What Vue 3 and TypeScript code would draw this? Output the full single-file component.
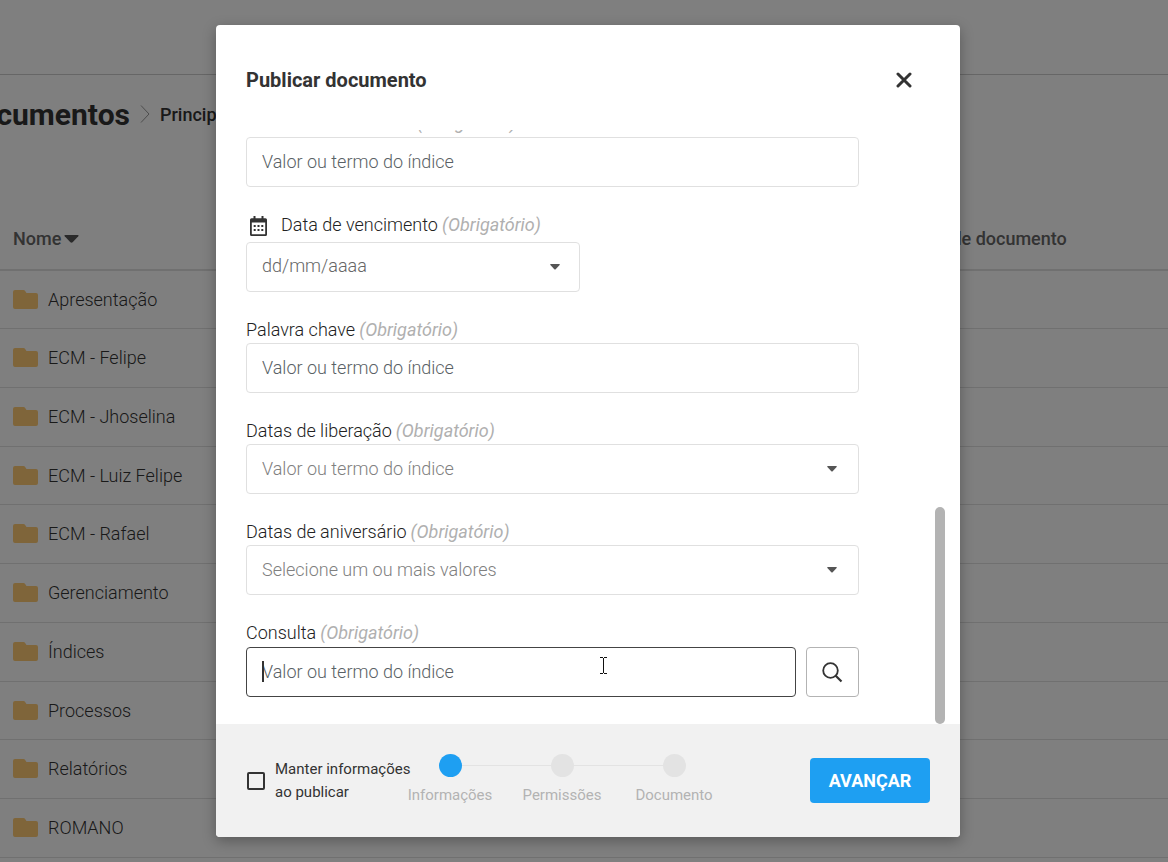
<script setup lang="ts">
import { ref } from 'vue'

interface Field {
  id: string
  label: string
  kind: 'text' | 'date' | 'select' | 'search'
  placeholder: string
}

const folders: string[] = [
  'Apresentação',
  'ECM - Felipe',
  'ECM - Jhoselina',
  'ECM - Luiz Felipe',
  'ECM - Rafael',
  'Gerenciamento',
  'Índices',
  'Processos',
  'Relatórios',
  'ROMANO',
]

const fields: Field[] = [
  { id: 'numero', label: 'Nome do documento', kind: 'text', placeholder: 'Valor ou termo do índice' },
  { id: 'vencimento', label: 'Data de vencimento', kind: 'date', placeholder: 'dd/mm/aaaa' },
  { id: 'palavra', label: 'Palavra chave', kind: 'text', placeholder: 'Valor ou termo do índice' },
  { id: 'liberacao', label: 'Datas de liberação', kind: 'select', placeholder: 'Valor ou termo do índice' },
  { id: 'aniversario', label: 'Datas de aniversário', kind: 'select', placeholder: 'Selecione um ou mais valores' },
  { id: 'consulta', label: 'Consulta', kind: 'search', placeholder: 'Valor ou termo do índice' },
]

const steps: string[] = ['Informações', 'Permissões', 'Documento']
const currentStep = ref(0)
const keep = ref(false)
</script>

<template>
  <div class="screen">
    <main class="page">
      <header class="topbar"></header>
      <nav class="breadcrumb">
        <h1>Documentos</h1>
        <svg width="10" height="18" viewBox="0 0 10 18" fill="none" stroke="#999" aria-hidden="true">
          <path d="M1 .5 9 9 1 17.500" />
        </svg>
        <a href="#principal">Principal</a>
      </nav>
      <table class="listing">
        <thead>
          <tr>
            <th class="name">
              Nome
              <svg width="15" height="8" viewBox="0 0 15 8" aria-hidden="true">
                <path d="M1.300 0h12.400q1.500.2.600 1.300L8.600 7.300q-1.100.9-2.200 0L.700 1.300Q-.2.2 1.300 0Z" fill="#555" />
              </svg>
            </th>
            <th>Tipo de documento</th>
          </tr>
        </thead>
        <tbody>
          <tr v-for="folder in folders" :key="folder">
            <td class="name">
              <span class="entry">
                <svg width="25" height="19" viewBox="0 0 25 19" aria-hidden="true">
                  <path d="M2 0h8.500q.8 0 1.300.6L13.500 3H23q2 0 2 2v12q0 2-2 2H2q-2 0-2-2V2q0-2 2-2Z" fill="#fecb74" />
                </svg>
                {{ folder }}
              </span>
            </td>
            <td></td>
          </tr>
        </tbody>
      </table>
    </main>

    <div class="overlay">
      <section class="modal" role="dialog" aria-labelledby="modal-title">
        <header class="modal-head">
          <h2 id="modal-title">Publicar documento</h2>
          <button class="close" type="button" aria-label="Fechar">
            <svg width="16" height="16" viewBox="0 0 16 16" fill="none" stroke="#333" stroke-width="3" stroke-linecap="round">
              <path d="M2 2 14 14M14 2 2 14" />
            </svg>
          </button>
        </header>

        <div class="modal-body">
          <form class="fields" @submit.prevent>
            <div v-for="field in fields" :key="field.id" class="field" :class="field.kind">
              <label :for="field.id">
                <svg v-if="field.kind === 'date'" class="calendar" width="17" height="20" viewBox="0 0 17 20" fill="#333" aria-hidden="true">
                  <path fill-rule="evenodd" d="M3.500 0H5.500V2.200H11.500V0H13.500V2.200H15.500Q17 2.200 17 3.700V18.500Q17 20 15.500 20H1.500Q0 20 0 18.500V3.700Q0 2.200 1.500 2.200H3.500ZM1.800 6.500V18.200H15.200V6.500Z" />
                  <path d="M3.700 9h2v2h-2zM7.500 9h2v2h-2zM11.300 9h2v2h-2zM3.700 13h2v2h-2zM7.500 13h2v2h-2zM11.300 13h2v2h-2z" />
                </svg>
                <span class="caption">{{ field.label }}</span>
                <em>(Obrigatório)</em>
              </label>
              <div class="control">
                <select v-if="field.kind === 'select'" :id="field.id">
                  <option>{{ field.placeholder }}</option>
                </select>
                <input v-else :id="field.id" type="text" :placeholder="field.placeholder" />
                <svg v-if="field.kind === 'select' || field.kind === 'date'" class="arrow" width="10" height="6" viewBox="0 0 10 6" aria-hidden="true">
                  <path d="M.8 0h8.400q1 .2.400 1L5.700 5.200q-.7.600-1.400 0L.4 1Q-.2.200.8 0Z" fill="#555" />
                </svg>
                <template v-if="field.kind === 'search'">
                  <span class="caret"></span>
                  <svg class="pointer" width="7" height="17" viewBox="0 0 7 17" fill="none" stroke="#111" aria-hidden="true">
                    <path d="M0 .5H3M4 .5H7M3.500 1V16M0 16.500H3M4 16.500H7" />
                  </svg>
                  <button class="lookup" type="button" aria-label="Pesquisar">
                    <svg width="21" height="21" viewBox="0 0 21 21" fill="none" stroke="#333">
                      <circle cx="8.500" cy="8.500" r="7.300" stroke-width="1.800" />
                      <path d="M13.500 13.500 19.500 19.500" stroke-width="2.200" />
                    </svg>
                  </button>
                </template>
              </div>
            </div>
          </form>
          <div class="track"><div class="thumb"></div></div>
        </div>

        <footer class="modal-foot">
          <label class="keep">
            <input v-model="keep" type="checkbox" />
            <span>Manter informações<br />ao publicar</span>
          </label>
          <ol class="steps">
            <li v-for="(step, i) in steps" :key="step" :class="{ active: i === currentStep }">
              <span class="dot"></span>
              {{ step }}
            </li>
          </ol>
          <button class="next" type="button">AVANÇAR</button>
        </footer>
      </section>
    </div>
  </div>
</template>

<style>
body {
  margin: 0;
  overflow: hidden;
}
</style>

<style scoped>
* {
  box-sizing: border-box;
}
.screen {
  height: 100vh;
  overflow: hidden;
  font-family: Roboto, "Liberation Sans", sans-serif;
  font-size: 18px;
  color: #333;
  background: #fff;
}
input,
select,
button {
  font: inherit;
}
.topbar {
  height: 75px;
  border-bottom: 1px solid #ccc;
}
.breadcrumb {
  display: flex;
  align-items: center;
  gap: 10px;
  height: 78px;
  margin-left: -40px;
}
.breadcrumb h1 {
  margin: 0;
  font-size: 30px;
  font-weight: 700;
}
.breadcrumb a {
  font-weight: 500;
  color: inherit;
  text-decoration: none;
}
.listing {
  width: 100%;
  margin-top: 55px;
  border-collapse: separate;
  border-spacing: 0;
  table-layout: fixed;
}
.listing th {
  height: 63px;
  padding: 0 0 1px;
  font-weight: 500;
  text-align: left;
  color: #666;
  border-bottom: 2px solid #e0e0e0;
}
.listing .name {
  width: 78%;
  padding-left: 13px;
}
.listing th svg {
  margin-left: -2px;
  vertical-align: 2px;
}
.listing td {
  height: 59px;
  padding: 0 0 2px;
  font-weight: 300;
  border-bottom: 1px solid #e0e0e0;
}
.listing tr:first-child td,
.listing tr:nth-child(4n) td {
  height: 58px;
  padding-bottom: 0;
}
.entry {
  display: flex;
  align-items: center;
  gap: 10px;
}
.overlay {
  position: absolute;
  inset: 0;
  display: flex;
  justify-content: center;
  padding: 25px 0 25px 8px;
  background: rgba(0, 0, 0, 0.5);
}
.modal {
  display: flex;
  flex-direction: column;
  width: 100%;
  max-width: 744px;
  overflow: hidden;
  background: #fff;
  border-radius: 4px;
  box-shadow: 0 4px 14px rgba(0, 0, 0, 0.3);
}
.modal-head {
  display: flex;
  align-items: center;
  justify-content: space-between;
  height: 105px;
  padding: 4px 48px 0 30px;
}
.modal-head h2 {
  margin: 0;
  font-size: 20px;
  font-weight: 700;
}
.close {
  display: flex;
  padding: 0;
  background: none;
  border: 0;
}
.modal-body {
  display: flex;
  flex: 1;
  min-height: 0;
  padding: 0 15px 0 30px;
  overflow: hidden;
}
.fields {
  display: flex;
  flex: 1;
  flex-direction: column;
  justify-content: flex-end;
  gap: 25px;
  margin-right: 76px;
  padding-bottom: 27px;
}
.field label {
  display: flex;
  height: 26px;
  line-height: 26px;
}
.field:first-child label,
.field.search label {
  height: 27px;
}
.field.date label {
  height: 30px;
}
.calendar {
  margin: 4px 14px 0 4px;
}
.caption {
  margin-right: 4px;
  font-weight: 300;
  color: #222;
}
em {
  color: #b0b0b0;
}
.control {
  position: relative;
  display: flex;
  gap: 10px;
}
.date .control {
  width: 334px;
}
.control input,
.control select {
  flex: 1;
  min-width: 0;
  height: 50px;
  padding: 0 15px 2px;
  font-weight: 300;
  color: #808080;
  background: #fff;
  border: 1px solid #e0e0e0;
  border-radius: 4px;
  outline: 0;
  appearance: none;
}
.control input::placeholder {
  color: #596165;
  opacity: 1;
}
.date input::placeholder {
  color: #666;
}
.date input {
  padding-bottom: 4px;
}
.control select {
  padding-bottom: 1px;
}
.search input {
  border-color: #444;
}
.arrow {
  position: absolute;
  top: 22px;
  right: 22px;
}
.date .arrow {
  right: 20px;
}
.caret {
  position: absolute;
  top: 14px;
  left: 16px;
  width: 2px;
  height: 21px;
  background: #333;
}
.pointer {
  position: absolute;
  top: 10px;
  left: 354px;
}
.lookup {
  display: flex;
  align-items: center;
  justify-content: center;
  width: 53px;
  height: 50px;
  padding: 0;
  background: #fff;
  border: 1px solid #b3b3b3;
  border-radius: 4px;
}
.track {
  display: flex;
  align-items: flex-end;
  width: 10px;
}
.thumb {
  width: 10px;
  height: 217px;
  background: #b3b3b3;
  border-radius: 5px;
}
.modal-foot {
  display: flex;
  align-items: center;
  height: 113px;
  padding: 0 30px;
  background: #f1f1f1;
}
.keep {
  display: flex;
  align-items: center;
  gap: 10px;
  width: 148px;
  font-size: 15px;
  line-height: 23px;
  white-space: nowrap;
}
.keep input {
  flex: none;
  width: 18px;
  height: 18px;
  margin: 0 0 0 1px;
  border: 2px solid #333;
  border-radius: 2px;
  appearance: none;
}
.steps {
  display: flex;
  margin: 0;
  padding: 0 0 2px;
  font-size: 15px;
  line-height: 20px;
  color: #b3b3b3;
  list-style: none;
}
.steps li {
  position: relative;
  display: flex;
  flex-direction: column;
  align-items: center;
  gap: 8px;
  width: 112px;
}
.steps li + li::before {
  position: absolute;
  top: 11px;
  right: 50%;
  width: 100%;
  height: 1px;
  content: "";
  background: #e3e3e3;
}
.dot {
  z-index: 1;
  width: 23px;
  height: 23px;
  background: #e3e3e3;
  border-radius: 50%;
}
.active .dot {
  background: #1e9ff2;
}
.next {
  width: 120px;
  height: 45px;
  margin-left: auto;
  padding: 0;
  font-weight: 700;
  color: #fff;
  background: #1e9ff2;
  border: 0;
  border-radius: 4px;
}
</style>
